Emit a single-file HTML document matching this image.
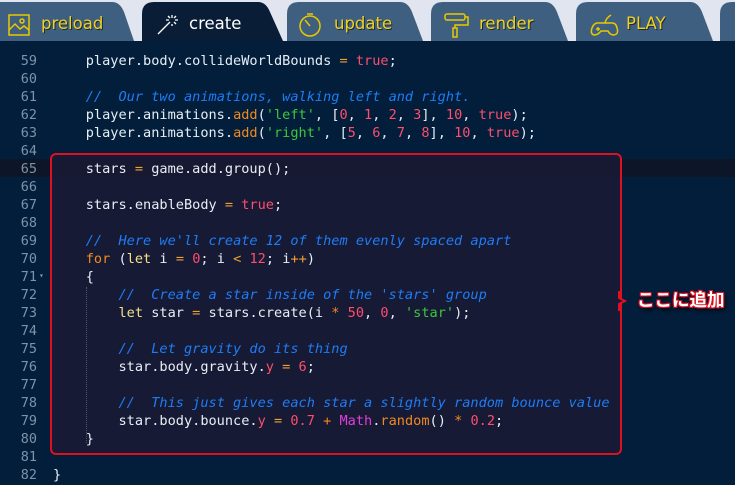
<!DOCTYPE html>
<html><head><meta charset="utf-8"><style>
body{margin:0;width:735px;height:485px;overflow:hidden;background:#021e3b;font-family:"DejaVu Sans Mono","Liberation Mono",monospace;}
#tabs{position:absolute;left:0;top:0;width:735px;height:41px;background:#e1e5f0}
.tl{position:absolute;top:14px;font-family:"DejaVu Sans","Liberation Sans",sans-serif;font-size:16.5px;color:#f0d020;text-shadow:1px 1px 0 #1a2a3a}
#ed{position:absolute;left:0;top:41px;width:735px;height:444px;background:#021e3b}
.ln{position:absolute;left:0;width:37px;text-align:right;font-size:13.5px;color:#7f92a8;}
.cd{position:absolute;left:53px;font-size:13.6px;color:#e8eef5;white-space:pre;}
.c{color:#1f7cf5;font-style:italic}.s{color:#3cc83c}.n{color:#ff4d6d}.o{color:#f0a030}.k{color:#f08a20}.l{color:#f5e08a}.m{color:#e040d8}
</style></head><body>
<div id="tabs">
<svg width="735" height="41" style="position:absolute;left:0;top:0">
<path d="M-10,41 V2 H112 Q120,2 124,12 L134,41Z" fill="#3e5f80"/>
<path d="M142,41 V14 Q142,2 154,2 H258 Q266,2 270,12 L283,41Z" fill="#0a1d37"/>
<path d="M287,41 V14 Q287,2 299,2 H400 Q408,2 412,12 L423,41Z" fill="#3e5f80"/>
<path d="M431,41 V14 Q431,2 443,2 H545 Q553,2 557,12 L568,41Z" fill="#3e5f80"/>
<path d="M576,41 V14 Q576,2 588,2 H690 Q698,2 702,12 L713,41Z" fill="#3e5f80"/>
<path d="M720,41 V14 Q720,2 732,2 H740 V41Z" fill="#3e5f80"/>
<g fill="none" stroke="#e8c800" stroke-width="1.5">
<rect x="9" y="15" width="20" height="20"/><path d="M9,30 L15,24 L20,29 L24,26 L29,30"/><circle cx="22" cy="21" r="2"/>
<circle cx="310" cy="26" r="10"/><path d="M310,26 L305,20 M307,14 H313"/>
<rect x="445" y="14" width="20" height="6" rx="2"/><path d="M465,17 H468 V25 H455 V28"/><rect x="453" y="28" width="4" height="9"/>
<path d="M594,35 Q590,34 592,28 Q594,22 600,23 H610 Q616,22 617,28 Q619,34 614,35 Q610,35 608,31 H601 Q598,35 594,35Z M605,23 Q606,18 611,15"/><path d="M596,29 H600 M598,27 V31"/>
</g>
<g stroke="#fff" stroke-width="1.3"><path d="M158,34 L170,22"/><path d="M172,15 V18 M172,24 V26 M166,20 H169 M175,20 H178 M168,16 L170,18 M176,16 L174,18 M176,24 L174,22"/></g>
</svg>
<div class="tl" style="left:41px">preload</div>
<div class="tl" style="left:189px;color:#fff;text-shadow:none">create</div>
<div class="tl" style="left:334px">update</div>
<div class="tl" style="left:479px">render</div>
<div class="tl" style="left:626px">PLAY</div>
</div>
<div id="ed">
<div style="position:absolute;left:0;top:118px;width:735px;height:18px;background:#0c1628"></div>
<div style="position:absolute;left:50px;top:112px;width:568px;height:298px;border:2px solid #e01020;border-radius:6px;background:rgba(26,26,52,0.85)"></div>
<svg style="position:absolute;left:617px;top:250px" width="12" height="20"><path d="M2,0 V7 L8,10 L2,13 V20" fill="#1a1a34" stroke="#e01020" stroke-width="2"/></svg>
<div style="position:absolute;left:637px;top:246px;font-family:'Noto Sans CJK JP',sans-serif;font-weight:bold;font-size:17.5px;color:#fff;text-shadow:-1px -1px 0 #e01020,1px -1px 0 #e01020,-1px 1px 0 #e01020,1px 1px 0 #e01020,0 0 2px #e01020,2px 3px 4px #000">ここに追加</div>
<div style="position:absolute;left:86px;top:246px;height:156px;border-left:1px dotted #556"></div>
</div>
<div id="code" style="position:absolute;left:0;top:53px">
<div class="ln" style="top:0">59</div><div class="cd" style="top:0">    player.body.collideWorldBounds <span class="o">=</span> <span class="n">true</span>;</div>
<div class="ln" style="top:18px">60</div>
<div class="ln" style="top:36px">61</div><div class="cd" style="top:36px">    <span class="c">//  Our two animations, walking left and right.</span></div>
<div class="ln" style="top:54px">62</div><div class="cd" style="top:54px">    player.animations.<span class="k">add</span>(<span class="s">'left'</span>, [<span class="n">0</span>, <span class="n">1</span>, <span class="n">2</span>, <span class="n">3</span>], <span class="n">10</span>, <span class="n">true</span>);</div>
<div class="ln" style="top:72px">63</div><div class="cd" style="top:72px">    player.animations.<span class="k">add</span>(<span class="s">'right'</span>, [<span class="n">5</span>, <span class="n">6</span>, <span class="n">7</span>, <span class="n">8</span>], <span class="n">10</span>, <span class="n">true</span>);</div>
<div class="ln" style="top:90px">64</div>
<div class="ln" style="top:108px">65</div><div class="cd" style="top:108px">    stars <span class="o">=</span> game.add.group();</div>
<div class="ln" style="top:126px">66</div>
<div class="ln" style="top:144px">67</div><div class="cd" style="top:144px">    stars.enableBody <span class="o">=</span> <span class="n">true</span>;</div>
<div class="ln" style="top:162px">68</div>
<div class="ln" style="top:180px">69</div><div class="cd" style="top:180px">    <span class="c">//  Here we'll create 12 of them evenly spaced apart</span></div>
<div class="ln" style="top:198px">70</div><div class="cd" style="top:198px">    <span class="k">for</span> (<span class="l">let</span> i <span class="o">=</span> <span class="n">0</span>; i <span class="o">&lt;</span> <span class="n">12</span>; i<span class="o">++</span>)</div>
<div class="ln" style="top:216px">71</div><div class="cd" style="top:218px;left:39px;font-size:8px;color:#7f92a8">▾</div><div class="cd" style="top:216px">    {</div>
<div class="ln" style="top:234px">72</div><div class="cd" style="top:234px">        <span class="c">//  Create a star inside of the 'stars' group</span></div>
<div class="ln" style="top:252px">73</div><div class="cd" style="top:252px">        <span class="l">let</span> star <span class="o">=</span> stars.create(i <span class="k">*</span> <span class="n">50</span>, <span class="n">0</span>, <span class="s">'star'</span>);</div>
<div class="ln" style="top:270px">74</div>
<div class="ln" style="top:288px">75</div><div class="cd" style="top:288px">        <span class="c">//  Let gravity do its thing</span></div>
<div class="ln" style="top:306px">76</div><div class="cd" style="top:306px">        star.body.gravity.<span class="n">y</span> <span class="o">=</span> <span class="n">6</span>;</div>
<div class="ln" style="top:324px">77</div>
<div class="ln" style="top:342px">78</div><div class="cd" style="top:342px">        <span class="c">//  This just gives each star a slightly random bounce value</span></div>
<div class="ln" style="top:360px">79</div><div class="cd" style="top:360px">        star.body.bounce.<span class="n">y</span> <span class="o">=</span> <span class="n">0.7</span> <span class="k">+</span> <span class="m">Math</span>.<span class="k">random</span>() <span class="k">*</span> <span class="n">0.2</span>;</div>
<div class="ln" style="top:378px">80</div><div class="cd" style="top:378px">    }</div>
<div class="ln" style="top:396px">81</div>
<div class="ln" style="top:414px">82</div><div class="cd" style="top:414px">}</div>
</div>
</body></html>
